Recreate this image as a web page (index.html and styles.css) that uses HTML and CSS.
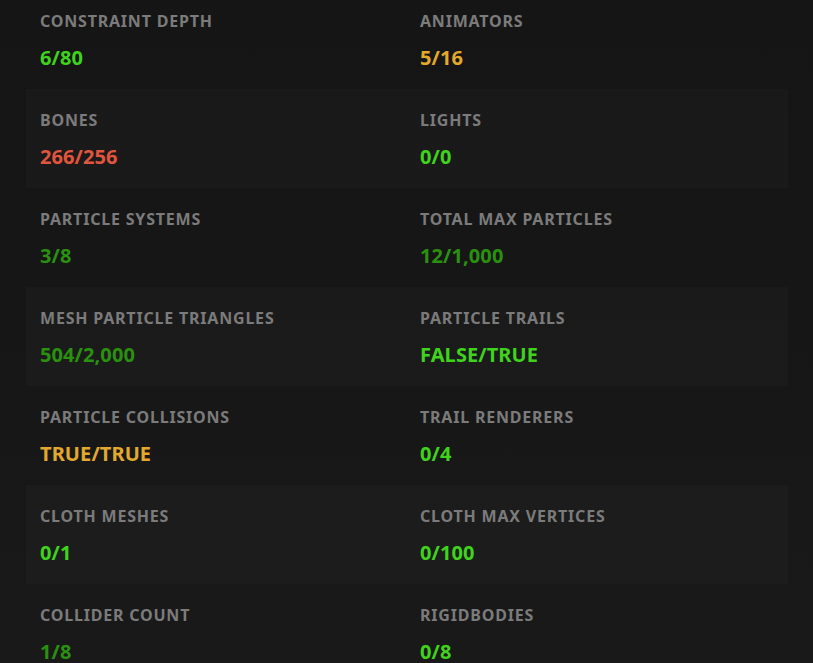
FILE: index.html
```html
<!DOCTYPE html>
<html lang="en">
<head>
<meta charset="utf-8">
<title>Performance stats</title>
<link rel="stylesheet" href="styles.css">
</head>
<body>
<div class="stats">
  <div class="row">
    <div class="cell"><div class="label">Constraint Depth</div><div class="value ok">6/80</div></div>
    <div class="cell"><div class="label">Animators</div><div class="value warn">5/16</div></div>
  </div>
  <div class="row band">
    <div class="cell"><div class="label">Bones</div><div class="value bad">266/256</div></div>
    <div class="cell"><div class="label">Lights</div><div class="value ok">0/0</div></div>
  </div>
  <div class="row">
    <div class="cell"><div class="label">Particle Systems</div><div class="value good">3/8</div></div>
    <div class="cell"><div class="label">Total Max Particles</div><div class="value good">12/1,000</div></div>
  </div>
  <div class="row band">
    <div class="cell"><div class="label">Mesh Particle Triangles</div><div class="value good">504/2,000</div></div>
    <div class="cell"><div class="label">Particle Trails</div><div class="value ok">FALSE/TRUE</div></div>
  </div>
  <div class="row">
    <div class="cell"><div class="label">Particle Collisions</div><div class="value warn">TRUE/TRUE</div></div>
    <div class="cell"><div class="label">Trail Renderers</div><div class="value ok">0/4</div></div>
  </div>
  <div class="row band">
    <div class="cell"><div class="label">Cloth Meshes</div><div class="value ok">0/1</div></div>
    <div class="cell"><div class="label">Cloth Max Vertices</div><div class="value ok">0/100</div></div>
  </div>
  <div class="row">
    <div class="cell"><div class="label">Collider Count</div><div class="value good">1/8</div></div>
    <div class="cell"><div class="label">Rigidbodies</div><div class="value ok">0/8</div></div>
  </div>
</div>
</body>
</html>
```
FILE: styles.css
```css
html, body {
  margin: 0;
  padding: 0;
  height: 100%;
  overflow: hidden;
}
body {
  background: linear-gradient(180deg, #151515 0%, #161616 40%, #191919 100%);
  font-family: "Noto Sans", "Open Sans", sans-serif;
  font-weight: 700;
}
.stats {
  margin: -10px 25px 0 26px;
}
.row {
  display: grid;
  grid-template-columns: 1fr 1fr;
  height: 99px;
  box-sizing: border-box;
  padding-top: 20.5px;
}
.row.band {
  background: rgba(255, 255, 255, 0.018);
}
.cell {
  padding-left: 14px;
  display: flex;
  flex-direction: column;
  gap: 14px;
}
.cell + .cell {
  padding-left: 13px;
}
.label {
  font-size: 16px;
  line-height: 20px;
  letter-spacing: 0.8px;
  text-transform: uppercase;
  color: #7b7b7b;
}
.value {
  font-size: 20px;
  line-height: 26px;
  letter-spacing: 0.1px;
}
.ok { color: #3fd31c; }
.good { color: #2a900f; }
.warn { color: #e2a92e; }
.bad { color: #e0553d; }
```
